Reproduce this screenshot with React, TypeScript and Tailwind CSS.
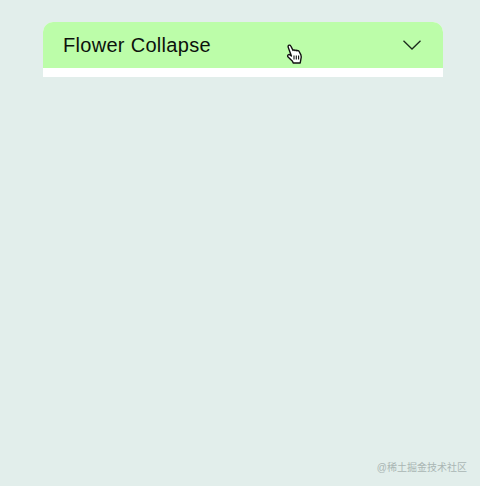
export default function App() {
  return (
    <main className="relative h-[486px] w-[480px] overflow-hidden bg-[#e2eeeb] pl-[43px] pt-[22px] font-['Liberation_Sans','Noto_Sans_CJK_SC',sans-serif]">
      <div className="w-[400px] bg-white pb-[9px] rounded-t-[10px]">
        <div className="flex h-[46px] items-center justify-between rounded-t-[10px] bg-[#bcfda9] pl-5 pr-[22px]">
          <span className="text-[20px] leading-none text-[#0c120c] tracking-[0.3px]">Flower Collapse</span>
          <svg width="18" height="10" viewBox="0 0 18 10" fill="none" stroke="#1c2a1c" strokeWidth="1.3">
            <path d="M0.5 0.8 L9 9 L17.5 0.8" />
          </svg>
        </div>
      </div>

      {/* hand cursor */}
      <svg className="absolute left-[286px] top-[44px]" width="17" height="20" viewBox="0 0 17 20">
        <path
          d="M2.6 1.4c.8-.6 1.8-.3 2.2.6L7 6.4c.4-.7 1.6-.7 2 .2.4-.7 1.6-.6 2 .3.5-.6 1.6-.4 2 .4l1.9 3.6c.6 1.6.5 3.4-.1 4.7l-.6 3.4H7.2l-.7-1.8-4.4-4.2c-.7-.8-.6-1.7.1-2.2.7-.4 1.5-.2 2.2.4l1 .9L2.2 3.2c-.3-.7-.1-1.4.4-1.8z"
          fill="#fff"
          stroke="#111"
          strokeWidth="1.4"
          strokeLinejoin="round"
        />
        <path d="M8 11.5v4M10.3 11.5v4M12.6 11.5v4" stroke="#111" strokeWidth="1.1" />
      </svg>

      <span className="absolute right-[13px] top-[461px] text-[10px] leading-[13px] text-[#aab6b4]">@稀土掘金技术社区</span>
    </main>
  );
}
